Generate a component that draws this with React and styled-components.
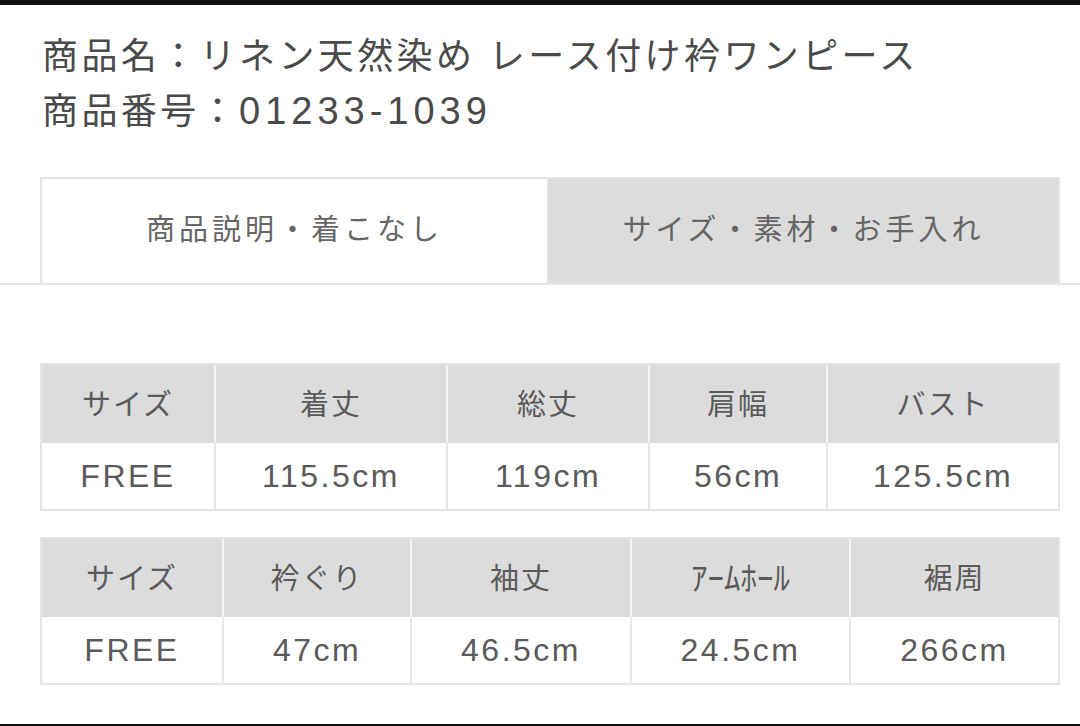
import styled, { createGlobalStyle } from 'styled-components';

// Product detail: title block, two tabs, and two size tables.
const Global = createGlobalStyle`
  html, body {
    margin: 0;
    background: #fff;
  }
  body {
    font-family: "Liberation Sans", "Noto Sans CJK JP", sans-serif;
    color: #555;
  }
`;

const Page = styled.div`
  display: flex;
  flex-direction: column;
  width: 1080px;
  height: 726px;
  overflow: hidden;
  background: #fff;
`;

const Bar = styled.div`
  height: ${({ $h }) => $h}px;
  background: #111;
  flex-shrink: 0;
`;

const Title = styled.div`
  padding: 24px 0 0 42px;

  p {
    margin: 0;
    font-size: 36px;
    line-height: 55px;
    letter-spacing: 3.4px;
    color: #4a4a4a;
    white-space: nowrap;
  }
`;

const Code = styled.span`
  font-size: 38px;
  letter-spacing: 5px;
`;

const TabBar = styled.div`
  display: flex;
  margin-top: 38px;
  padding: 0 20px 0 40px;
  border-bottom: 2px solid #e4e4e4;
`;

const Tab = styled.div`
  display: flex;
  align-items: center;
  justify-content: center;
  box-sizing: border-box;
  width: ${({ $w }) => $w}px;
  height: 106px;
  margin-bottom: ${({ $active }) => ($active ? '-2px' : '0')};
  background: ${({ $active }) => ($active ? '#fff' : '#dcdcdc')};
  border: 2px solid #e4e4e4;
  border-bottom: none;
  border-left: ${({ $active }) => ($active ? '2px solid #e4e4e4' : 'none')};
  font-size: 29px;
  letter-spacing: 4px;
  color: #666;
  padding-bottom: 8px;
`;

const Tables = styled.div`
  display: flex;
  flex-direction: column;
  gap: 26px;
  padding: 78px 20px 0 40px;
`;

const Grid = styled.div`
  display: grid;
  grid-template-columns: ${({ $cols }) => $cols.map((c) => `${c}px`).join(' ')};
  grid-template-rows: 78px 66px;
  border: 2px solid #e4e4e4;
  width: 1020px;
  box-sizing: border-box;
`;

const Cell = styled.div`
  display: flex;
  align-items: center;
  justify-content: center;
  font-size: ${({ $head }) => ($head ? '29px' : '32px')};
  letter-spacing: ${({ $head }) => ($head ? '2px' : '2.5px')};
  color: #5a5a5a;
  background: ${({ $head }) => ($head ? '#dcdcdc' : '#fff')};
  border-left: ${({ $first, $head }) =>
    $first ? 'none' : `2px solid ${$head ? '#f4f4f4' : '#e8e8e8'}`};
  white-space: nowrap;
  padding-bottom: ${({ $head }) => ($head ? '4px' : '0')};
`;

const Narrow = styled.span`
  font-size: 33px;
  letter-spacing: 0;
`;

const tables = [
  {
    cols: [172, 232, 202, 178, 232],
    head: ['サイズ', '着丈', '総丈', '肩幅', 'バスト'],
    row: ['FREE', '115.5cm', '119cm', '56cm', '125.5cm'],
  },
  {
    cols: [180, 188, 220, 219, 209],
    head: ['サイズ', '衿ぐり', '袖丈', <Narrow>ｱｰﾑﾎｰﾙ</Narrow>, '裾周'],
    row: ['FREE', '47cm', '46.5cm', '24.5cm', '266cm'],
  },
];

function SizeTable({ cols, head, row }) {
  return (
    <Grid $cols={cols}>
      {head.map((h, i) => (
        <Cell key={`h${i}`} $head $first={i === 0}>
          {h}
        </Cell>
      ))}
      {row.map((v, i) => (
        <Cell key={`r${i}`} $first={i === 0}>
          {v}
        </Cell>
      ))}
    </Grid>
  );
}

export default function App() {
  return (
    <Page>
      <Global />
      <Bar $h={5} />
      <Title>
        <p>商品名：リネン天然染め レース付け衿ワンピース</p>
        <p>
          商品番号：<Code>01233-1039</Code>
        </p>
      </Title>
      <TabBar>
        <Tab $active $w={509}>商品説明・着こなし</Tab>
        <Tab $w={511}>サイズ・素材・お手入れ</Tab>
      </TabBar>
      <Tables>
        {tables.map((t, i) => (
          <SizeTable key={i} {...t} />
        ))}
      </Tables>
      <Bar $h={2} style={{ marginTop: 'auto' }} />
    </Page>
  );
}
